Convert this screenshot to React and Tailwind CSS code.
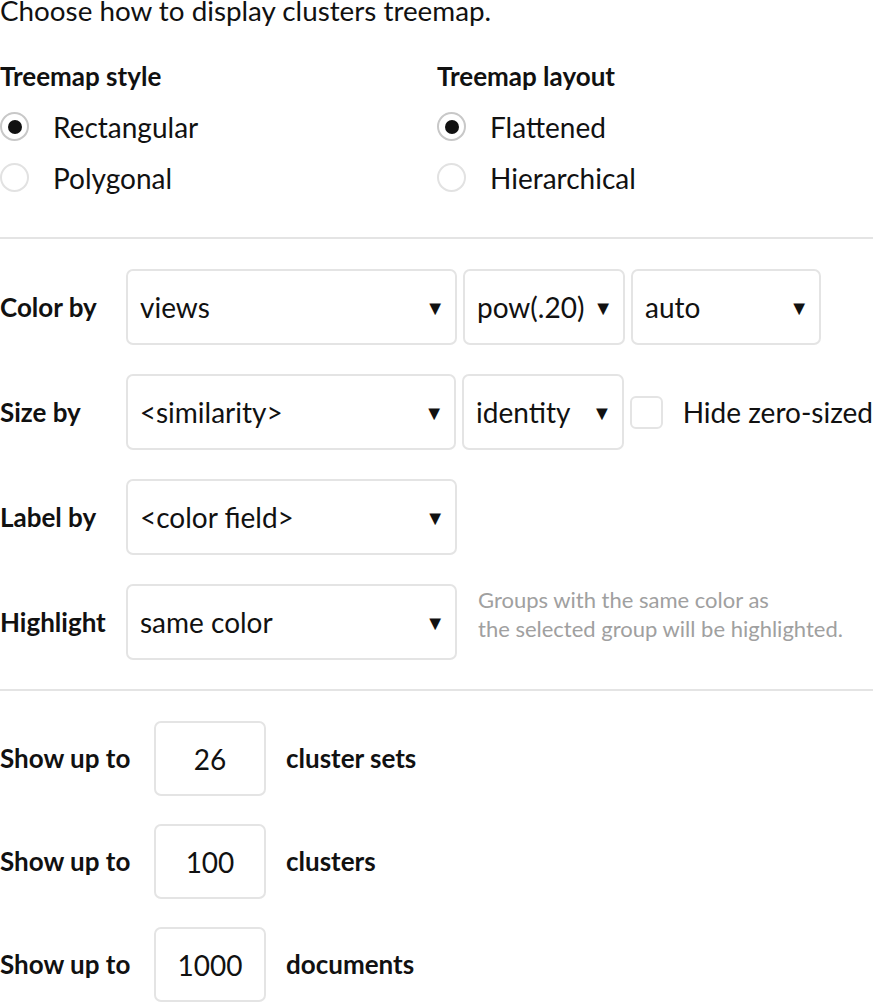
import React from "react";

const Radio = ({ checked, label }) => (
  <div className="flex items-center h-[51px]">
    <span
      className={
        "size-[29px] rounded-full border-2 flex items-center justify-center " +
        (checked ? "border-[#c8c8c8]" : "border-[#e2e2e2]")
      }
    >
      {checked && <span className="size-[14px] rounded-full bg-[#111]" />}
    </span>
    <span className="ml-[24px] text-[28px] text-[#111]">{label}</span>
  </div>
);

const Select = ({ value, width }) => (
  <div
    className={
      "h-[76px] border-2 border-[#e4e4e4] rounded-[7px] flex items-center justify-between pl-[12px] pr-[10px] text-[28px] text-[#111] " +
      width
    }
  >
    <span>{value}</span>
    <span className="text-[20px]">▼</span>
  </div>
);

const Num = ({ value }) => (
  <div className="w-[112px] h-[75px] border-2 border-[#e4e4e4] rounded-[7px] flex items-center justify-center text-[28px] text-[#111]">
    {value}
  </div>
);

export default function App() {
  return (
    <div className="w-[873px] h-[1003px] overflow-hidden bg-white font-['Lato',sans-serif] text-[#111]">
      <div className="-mt-[7px] text-[27.8px] leading-[36px] whitespace-nowrap">Choose how to display clusters treemap.</div>

      <div className="flex mt-[32px]">
        <div className="w-[437px]">
          <div className="font-bold text-[26px] leading-[30px]">Treemap style</div>
          <div className="mt-[10px]">
            <Radio checked label="Rectangular" />
            <Radio label="Polygonal" />
          </div>
        </div>
        <div>
          <div className="font-bold text-[26px] leading-[30px]">Treemap layout</div>
          <div className="mt-[10px]">
            <Radio checked label="Flattened" />
            <Radio label="Hierarchical" />
          </div>
        </div>
      </div>

      <hr className="mt-[34px] border-t-2 border-[#e4e4e4]" />

      <div className="flex flex-col gap-[29px] mt-[30px]">
        <div className="flex items-center">
          <div className="w-[126px] font-bold text-[26px]">Color by</div>
          <Select value="views" width="w-[331px]" />
          <div className="w-[6px]" />
          <Select value="pow(.20)" width="w-[162px]" />
          <div className="w-[6px]" />
          <Select value="auto" width="w-[190px]" />
        </div>
        <div className="flex items-center">
          <div className="w-[126px] font-bold text-[26px]">Size by</div>
          <Select value="<similarity>" width="w-[331px]" />
          <div className="w-[6px]" />
          <Select value="identity" width="w-[162px]" />
          <div className="ml-[6px] size-[33px] border-2 border-[#e4e4e4] rounded-[6px]" />
          <span className="ml-[20px] text-[28px] whitespace-nowrap">Hide zero-sized</span>
        </div>
        <div className="flex items-center">
          <div className="w-[126px] font-bold text-[26px]">Label by</div>
          <Select value="<color field>" width="w-[331px]" />
        </div>
        <div className="flex items-center">
          <div className="w-[126px] font-bold text-[26px]">Highlight</div>
          <Select value="same color" width="w-[331px]" />
          <div className="self-start mt-[1px] ml-[21px] text-[22px] leading-[29px] text-[#a0a0a0] whitespace-nowrap">
            Groups with the same color as
            <br />
            the selected group will be highlighted.
          </div>
        </div>
      </div>

      <hr className="mt-[29px] border-t-2 border-[#e4e4e4]" />

      <div className="flex flex-col gap-[28px] mt-[30px]">
        {[
          ["26", "cluster sets"],
          ["100", "clusters"],
          ["1000", "documents"],
        ].map(([n, l]) => (
          <div key={l} className="flex items-center">
            <div className="w-[154px] font-bold text-[26px]">Show up to</div>
            <Num value={n} />
            <div className="ml-[20px] font-bold text-[26px]">{l}</div>
          </div>
        ))}
      </div>
    </div>
  );
}
